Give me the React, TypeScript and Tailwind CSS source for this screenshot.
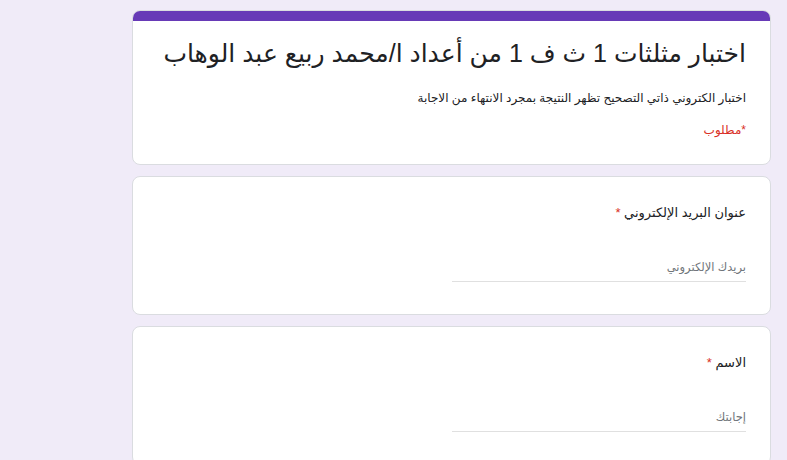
const font = { fontFamily: '"Liberation Sans", "DejaVu Sans", Arial, sans-serif' };

function Question({ label, placeholder }: { label: string; placeholder: string }) {
  return (
    <div className="rounded-lg border border-[#dadce0] bg-white px-6 pb-8 pt-6">
      <p className="text-[13px] leading-6 text-[#202124]">
        {label} <span className="text-[#d93025]">*</span>
      </p>
      <div className="mt-[29px] w-1/2 border-b border-[#e0e0e0] pb-[3px]">
        <span className="text-[11.5px] leading-5 text-[#70757a]">{placeholder}</span>
      </div>
    </div>
  );
}

export default function App() {
  return (
    <div dir="rtl" className="min-h-screen bg-[#f0ebf8] pt-[10px]" style={font}>
      <div className="mr-[16px] ml-[132px] flex flex-col gap-[11px]">
        <div className="overflow-hidden rounded-lg border border-[#dadce0] bg-white">
          <div className="h-[10px] bg-[#673ab7]" />
          <div className="px-6 pb-6 pt-[12px]">
            <h1 className="text-[25px] leading-[40px] text-[#202124]">
              اختبار مثلثات 1 ث ف 1 من أعداد ا/محمد ربيع عبد الوهاب
            </h1>
            <p className="mt-[15px] text-[12px] leading-5 text-[#202124]">
              اختبار الكتروني ذاتي التصحيح  تظهر النتيجة بمجرد الانتهاء من الاجابة
            </p>
            <p className="mt-3 text-[12px] leading-5 text-[#d93025]">*مطلوب</p>
          </div>
        </div>
        <Question label="عنوان البريد الإلكتروني" placeholder="بريدك الإلكتروني" />
        <Question label="الاسم" placeholder="إجابتك" />
      </div>
    </div>
  );
}
